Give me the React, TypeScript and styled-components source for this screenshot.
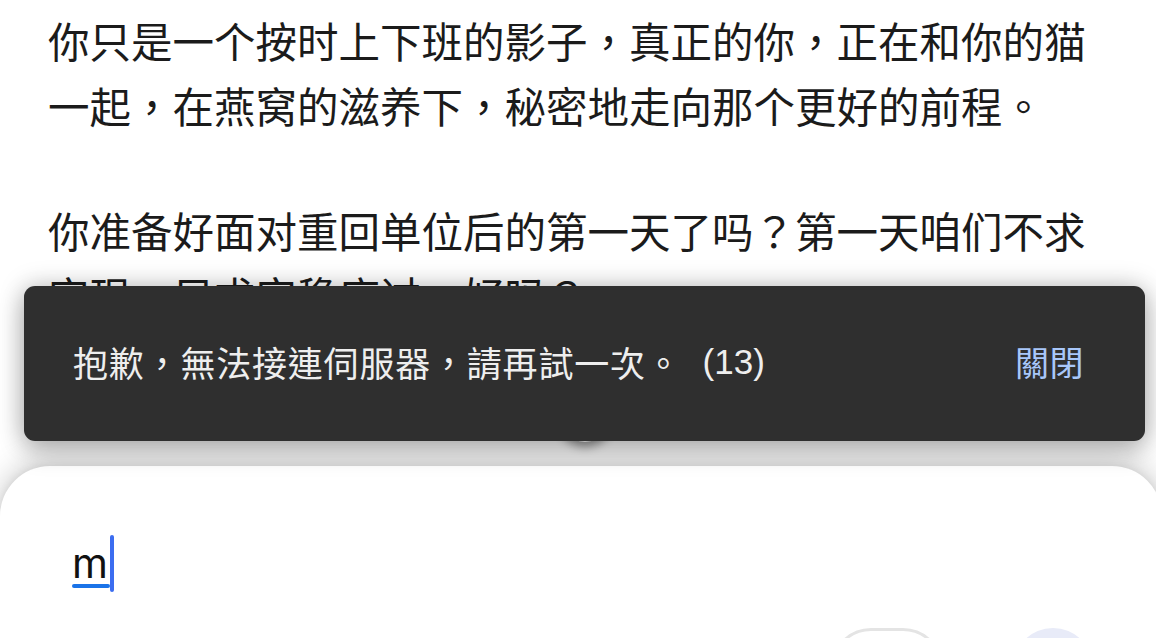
import React from "react";
import styled, { createGlobalStyle } from "styled-components";

const Global = createGlobalStyle`
  html, body {
    margin: 0;
    padding: 0;
    background: #ffffff;
    overflow: hidden;
  }
  * { box-sizing: border-box; }
`;

const Screen = styled.div`
  position: relative;
  width: 100vw;
  height: 100vh;
  display: grid;
  grid-template-rows: 1fr auto;
  overflow: hidden;
  background: #ffffff;
  font-family: "Noto Sans CJK TC", "Noto Sans", sans-serif;
`;

const Article = styled.div`
  padding: 8px 0 0 48px;
  overflow: hidden;
`;

const Paragraph = styled.p`
  width: 1048px;
  margin: 0 0 60px;
  font-size: 41.5px;
  line-height: 65px;
  color: #1b1b1b;
  font-weight: 400;
  font-kerning: none;
  text-spacing-trim: space-all;
`;

const ScrollButton = styled.div`
  position: absolute;
  left: 557px;
  top: 386px;
  width: 56px;
  height: 56px;
  border-radius: 50%;
  background: #ffffff;
  box-shadow: 0 5px 10px rgba(0, 0, 0, 0.4);
  z-index: 1;
`;

const Snackbar = styled.div`
  position: absolute;
  left: 24px;
  right: 11px;
  top: 286px;
  height: 155px;
  border-radius: 11px;
  background: #2f2f2f;
  box-shadow: 0 0 26px rgba(0, 0, 0, 0.22), 0 10px 26px rgba(0, 0, 0, 0.22);
  display: flex;
  align-items: center;
  justify-content: space-between;
  padding: 0 61px 0 49px;
  z-index: 3;
`;

const Message = styled.div`
  display: flex;
  align-items: center;
  color: #eeeeee;
  font-family: "Noto Sans CJK TC", "Noto Sans", sans-serif;
  font-size: 35px;
  letter-spacing: 0.8px;
  line-height: 1;
  margin-top: -4px;
  font-kerning: none;
`;

const Count = styled.span`
  margin-left: 21px;
  font-family: "Liberation Sans", Arial, sans-serif;
  letter-spacing: 0;
  font-size: 35px;
`;

const Action = styled.button`
  border: none;
  background: none;
  padding: 0;
  margin-top: -4px;
  color: #a8c7fa;
  font-family: "Noto Sans CJK TC", "Noto Sans", sans-serif;
  font-size: 34px;
  letter-spacing: 0.5px;
  cursor: pointer;
`;

const Composer = styled.div`
  position: relative;
  z-index: 2;
  height: 172px;
  margin: 0 -6px 0 0;
  border-radius: 50px 50px 0 0;
  background: #ffffff;
  box-shadow: 0 -4px 30px rgba(0, 0, 0, 0.22), 0 -1px 8px rgba(0, 0, 0, 0.06);
  padding: 69px 0 0 72px;
  display: flex;
  flex-direction: column;
  gap: 36px;
`;

const InputRow = styled.div`
  display: flex;
  align-items: center;
  height: 57px;
`;

const Composing = styled.span`
  position: relative;
  font-family: "Inter", "Liberation Sans", sans-serif;
  font-size: 41px;
  line-height: 57px;
  color: #111111;
  &::after {
    content: "";
    position: absolute;
    left: 0;
    right: -2px;
    bottom: 4px;
    height: 4px;
    border-radius: 2px;
    background: #1a73e8;
  }
`;

const Caret = styled.span`
  display: block;
  width: 4px;
  height: 57px;
  margin-left: 2px;
  border-radius: 2px;
  background: #3c6df0;
`;

const Toolbar = styled.div`
  display: flex;
  justify-content: flex-end;
  align-items: flex-start;
  gap: 70px;
  padding-right: 69px;
`;

const PillButton = styled.div`
  width: 112px;
  height: 80px;
  border-radius: 40px;
  border: 3px solid #e4e4e4;
  background: #ffffff;
`;

const RoundButton = styled.div`
  width: 80px;
  height: 80px;
  border-radius: 50%;
  background: #e8ebf8;
`;

export default function App() {
  return (
    <>
      <Global />
      <Screen>
        <Article>
          <Paragraph>
            你只是一个按时上下班的影子，真正的你，正在和你的猫一起，在燕窝的滋养下，秘密地走向那个更好的前程。
          </Paragraph>
          <Paragraph>
            你准备好面对重回单位后的第一天了吗？第一天咱们不求实现，只求安稳度过，好吗？
          </Paragraph>
        </Article>
        <ScrollButton />
        <Snackbar role="alert">
          <Message>
            抱歉，無法接連伺服器，請再試一次。
            <Count>(13)</Count>
          </Message>
          <Action>關閉</Action>
        </Snackbar>
        <Composer>
          <InputRow>
            <Composing>m</Composing>
            <Caret />
          </InputRow>
          <Toolbar>
            <PillButton />
            <RoundButton />
          </Toolbar>
        </Composer>
      </Screen>
    </>
  );
}
